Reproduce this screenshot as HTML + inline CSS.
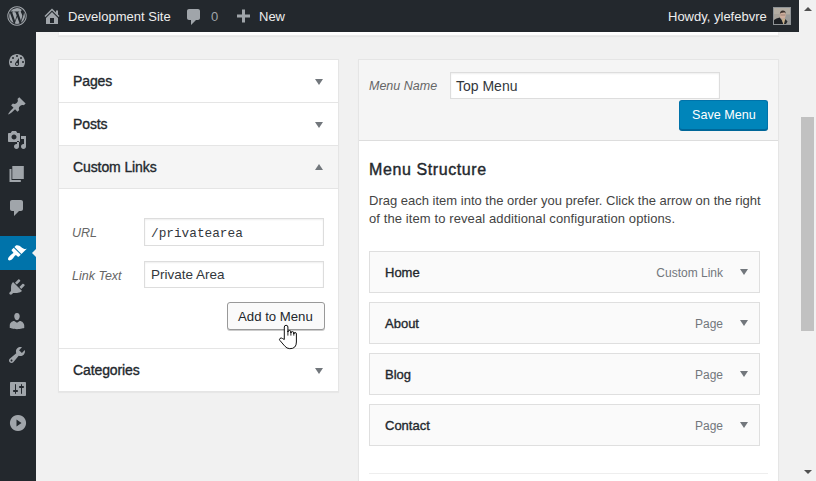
<!DOCTYPE html>
<html><head><meta charset="utf-8">
<style>
*{box-sizing:border-box;margin:0;padding:0}
html,body{width:816px;height:481px;overflow:hidden;background:#f1f1f1;font-family:"Liberation Sans",sans-serif;color:#444;font-size:13px}
.a{position:absolute}
.t{position:absolute;white-space:nowrap;line-height:1}
svg{position:absolute;display:block}
#bar{left:0;top:0;width:799px;height:32px;background:#23282d}
#side{left:0;top:32px;width:36px;height:449px;background:#23282d}
.ico{fill:#a0a5aa}
.box{background:#fff;border:1px solid #e5e5e5;box-shadow:0 1px 1px rgba(0,0,0,.04)}
.hd{position:absolute;left:0;width:279px;height:43px;border-bottom:1px solid #e5e5e5}
.hd span{position:absolute;left:14px;font-size:14px;font-weight:normal;color:#23282d;line-height:1;letter-spacing:-0.1px;-webkit-text-stroke:0.35px #23282d}
.arr{position:absolute;width:0;height:0;border-left:4px solid transparent;border-right:4px solid transparent}
.dn{border-top:6px solid #72777c}
.up{border-bottom:6px solid #72777c}
.inp{position:absolute;background:#fff;border:1px solid #ddd;box-shadow:inset 0 1px 2px rgba(0,0,0,.07)}
.lab{position:absolute;font-style:italic;color:#666;line-height:1;white-space:nowrap}
.item{position:absolute;left:369px;width:391px;height:42px;background:#fafafa;border:1px solid #dfdfdf}
.item b{position:absolute;left:15px;top:14px;font-size:13px;font-weight:normal;color:#23282d;line-height:1;-webkit-text-stroke:0.35px #23282d}
.item i{position:absolute;right:36px;top:15px;font-size:12px;font-style:normal;color:#72777c;line-height:1}
.item .arr{left:370px;top:17px}
</style></head><body>

<!-- side menu -->
<div id="side" class="a"></div>
<div class="a" style="left:0;top:236px;width:36px;height:34px;background:#0073aa"></div>
<div class="a" style="left:32px;top:249px;width:0;height:0;border-top:4px solid transparent;border-bottom:4px solid transparent;border-right:4px solid #f1f1f1"></div>
<!-- side icons -->
<svg style="left:7px;top:51px" width="20" height="20" viewBox="0 0 20 20"><g class="ico"><path d="M3.76 16h12.48c1.1-1.37 1.76-3.11 1.76-5 0-4.42-3.58-8-8-8s-8 3.58-8 8c0 1.89.66 3.63 1.76 5z"/><g fill="#23282d"><circle cx="10" cy="5" r="1"/><circle cx="6" cy="7" r="1"/><circle cx="14" cy="7" r="1"/><circle cx="4" cy="11" r="1"/><circle cx="16" cy="11" r="1"/><path d="M8.63 11.55L12 7v6c0 1.1-.9 2-2 2s-2-.9-2-2c0-.57.24-1.08.63-1.45z"/></g><circle cx="10" cy="13" r="1" /></g></svg>
<svg style="left:7px;top:96px" width="20" height="20" viewBox="0 0 20 20"><g class="ico"><path d="M10.44 3.02l1.82-1.82 6.36 6.35-1.83 1.82c-1.05-.68-2.48-.57-3.41.36l-.75.75c-.92.93-1.04 2.35-.35 3.41l-1.83 1.82-2.41-2.41-2.8 2.79c-.42.42-3.38 2.71-3.8 2.290s1.86-3.39 2.28-3.81l2.79-2.79L4.1 9.36l1.83-1.82c1.05.69 2.48.57 3.4-.36l.75-.75c.93-.92 1.05-2.35.36-3.41z"/></g></svg>
<svg style="left:7px;top:130px" width="20" height="20" viewBox="0 0 20 20"><g class="ico"><path d="M13 11V4c0-.55-.45-1-1-1h-1.67L9 1H5L3.67 3H2c-.55 0-1 .45-1 1v7c0 .55.45 1 1 1h10c.55 0 1-.45 1-1zM7 4.5c1.38 0 2.5 1.12 2.5 2.5S8.38 9.5 7 9.5 4.5 8.38 4.5 7 5.620 4.5 7 4.5zM14 6h5v10.5c0 1.38-1.12 2.5-2.5 2.5S14 17.88 14 16.5s1.12-2.5 2.5-2.5c.17 0 .34.02.5.05V9h-3V6zm-4 8.05V11h2v5.5c0 1.38-1.12 2.5-2.5 2.5S7 17.88 7 16.5 8.12 14 9.5 14c.17 0 .34.02.5.05z"/></g></svg>
<svg style="left:8px;top:164px" width="20" height="20" viewBox="0 0 20 20"><g class="ico"><path d="M4.3 2H15.8V15H4.3ZM1.5 5H3.5V16H12.8V18H1.5Z"/></g></svg>
<svg style="left:7px;top:198px" width="20" height="20" viewBox="0 0 20 20"><g class="ico"><path d="M5 2h9c1.1 0 2 .9 2 2v7c0 1.1-.9 2-2 2h-2l-5 5v-5H5c-1.1 0-2-.9-2-2V4c0-1.1.9-2 2-2z"/></g></svg>
<svg style="left:7px;top:243px" width="20" height="20" viewBox="0 0 20 20"><g class="ico"><path fill="#fff" d="M14.48 11.06L7.41 3.99l1.5-1.5c.5-.56 2.3-.47 3.51.32 1.21.8 1.43 1.28 2.91 2.1 1.18.64 2.450 1.26 4.45.85zm-.71.71L6.7 4.7 4.93 6.47c-.39.39-.39 1.02 0 1.41l1.06 1.06c.39.39.39 1.030 0 1.42-.6.6-1.43 1.11-2.21 1.69-.35.26-.7.53-1.01.84C1.43 14.23.4 16.08 1.4 17.07c.99 1 2.84-.03 4.18-1.36.31-.31.58-.66.85-1.02.57-.78 1.08-1.61 1.69-2.21.39-.39 1.02-.39 1.41 0l1.06 1.06c.39.39 1.02.39 1.41 0z"/></g></svg>
<svg style="left:7px;top:277px" width="20" height="20" viewBox="0 0 20 20"><g class="ico"><path d="M13.11 4.36L9.87 7.6 8 5.73l3.24-3.24c.35-.34 1.05-.2 1.56.32.52.51.66 1.21.31 1.55zm-8 1.77l.91-1.12 9.01 9.01-1.19.84c-.71.71-2.63 1.16-3.82 1.16H6.14L4.9 17.26c-.59.59-1.54.59-2.12 0-.59-.58-.59-1.53 0-2.12l1.24-1.24v-3.88c0-1.13.4-3.19 1.09-3.89zm7.26 3.97l3.24-3.240c.34-.35 1.04-.21 1.55.31.52.51.66 1.21.31 1.55l-3.24 3.25z"/></g></svg>
<svg style="left:7px;top:311px" width="20" height="20" viewBox="0 0 20 20"><g class="ico"><path d="M10 9.25c-2.27 0-2.73-3.44-2.73-3.44C7 4.02 7.82 2 9.97 2c2.16 0 2.98 2.02 2.710 3.81 0 0-.41 3.44-2.68 3.44zm0 2.57L12.72 10c2.39 0 4.52 2.33 4.52 4.53v2.49s-3.65 1.13-7.24 1.13c-3.65 0-7.24-1.13-7.24-1.13v-2.49c0-2.25 1.94-4.48 4.47-4.48z"/></g></svg>
<svg style="left:7px;top:345px" width="20" height="20" viewBox="0 0 20 20"><g class="ico"><path d="M16.68 9.77c-1.34 1.34-3.3 1.67-4.95.99l-5.41 6.52c-.99.99-2.59.99-3.58 0s-.99-2.59 0-3.57l6.52-5.42c-.68-1.65-.35-3.61.99-4.95 1.28-1.28 3.12-1.62 4.72-1.06l-2.89 2.89 2.82 2.82 2.86-2.87c.53 1.58.18 3.39-1.08 4.650zM3.81 16.21c.4.39 1.04.39 1.43 0 .4-.4.4-1.04 0-1.43-.39-.4-1.03-.4-1.43 0-.39.39-.39 1.03 0 1.43z" fill-rule="evenodd"/></g></svg>
<svg style="left:8px;top:379px" width="20" height="20" viewBox="0 0 20 20"><g class="ico"><path d="M18 16V4c0-.55-.45-1-1-1H3c-.55 0-1 .45-1 1v12c0 .55.45 1 1 1h14c.55 0 1-.45 1-1zM8 11h1c.55 0 1 .45 1 1s-.45 1-1 1H8v1.5c0 .28-.22.5-.5.5s-.5-.22-.5-.5V13H6c-.55 0-1-.45-1-1s.45-1 1-1h1V5.5c0-.28.22-.5.5-.5s.5.22.5.5V11zm5-2h-1c-.55 0-1-.45-1-1s.45-1 1-1h1V5.5c0-.28.22-.5.5-.5s.5.22.5.5V7h1c.55 0 1 .45 1 1s-.45 1-1 1h-1v5.5c0 .28-.22.5-.5.5s-.5-.22-.5-.5V9z"/></g></svg>
<svg style="left:8px;top:413px" width="20" height="20" viewBox="0 0 20 20"><g class="ico"><path fill-rule="evenodd" d="M10 1.9a8.1 8.1 0 1 0 .001 0zM8.5 6.5v7l5-3.5z"/></g></svg>
<!-- top strip (previous box bottom) -->
<div class="a" style="left:58px;top:28px;width:721px;height:8px;background:#fff;border:1px solid #ececec;border-top:none;box-shadow:0 1px 1px rgba(0,0,0,.04)"></div>
<!-- admin bar -->
<div id="bar" class="a"></div>
<!-- scrollbar -->
<div class="a" style="left:799px;top:0;width:17px;height:481px;background:#f1f1f1"></div>
<div class="a" style="left:801px;top:117px;width:13px;height:214px;background:#c1c1c1"></div>
<div class="a arr" style="left:804px;top:7px;border-bottom:4px solid #505050;border-left-width:4px;border-right-width:4px"></div>
<div class="a arr" style="left:804px;top:470px;border-top:4px solid #505050;border-left-width:4px;border-right-width:4px"></div>

<!-- admin bar content -->
<svg style="left:7px;top:6px" width="20" height="20" viewBox="0 0 20 20"><g class="ico">
<path fill-rule="evenodd" d="M10 0.3a9.7 9.7 0 1 0 0.001 0zM10 1.3a8.7 8.7 0 1 1 -0.001 0z"/>
<path d="M2.2 10a7.8 7.8 0 0 0 4.4 7l-3.7-10.2A7.8 7.8 0 0 0 2.2 10zM15.2 9.6c0-1-.35-1.6-.65-2.2-.4-.65-.78-1.2-.78-1.85 0-.73.55-1.4 1.33-1.4h.1A7.8 7.8 0 0 0 3.4 5.6h.5c.8 0 2.1-.1 2.1-.1.42-.03.47.6.05.64 0 0-.43.05-.9.07l2.87 8.53 1.72-5.17-1.23-3.36c-.42-.02-.82-.07-.82-.07-.42-.03-.37-.67.05-.64 0 0 1.3.1 2.08.1.8 0 2.1-.1 2.1-.1.42-.03.47.6.05.64 0 0-.43.05-.9.07l2.85 8.47.8-2.6c.35-1.1.6-1.9.6-2.6zM10.14 10.7l-2.36 6.87a7.8 7.8 0 0 0 4.8-.13l-.06-.1zM16.9 6.23c.03.25.05.52.05.8 0 .8-.15 1.68-.6 2.8l-2.38 6.9A7.8 7.8 0 0 0 16.9 6.23z"/>
</g></svg>
<svg style="left:42px;top:6px" width="20" height="20" viewBox="0 0 20 20"><path class="ico" d="M16 8.5l1.53 1.53-1.06 1.06L10 4.62l-6.47 6.47-1.06-1.06L10 2.5l4 4v-2h2v4zm-6-2.46l6 5.99V18H4v-5.97zM12 17v-5H8v5h4z"/></svg>
<div class="t" style="left:68px;top:10px;font-size:13px;color:#eee">Development Site</div>
<svg style="left:184px;top:7px" width="20" height="20" viewBox="0 0 20 20"><path class="ico" d="M5 2h9c1.1 0 2 .9 2 2v7c0 1.1-.9 2-2 2h-2l-5 5v-5H5c-1.1 0-2-.9-2-2V4c0-1.1.9-2 2-2z"/></svg>
<div class="t" style="left:211px;top:10px;font-size:13px;color:#a0a5aa">0</div>
<svg style="left:233px;top:6px" width="20" height="20" viewBox="0 0 20 20"><path class="ico" d="M17 7v3h-5v5H9v-5H4V7h5V2h3v5h5z" transform="translate(0,1.5)"/></svg>
<div class="t" style="left:259px;top:10px;font-size:13px;color:#eee">New</div>
<div class="t" style="left:668px;top:10px;font-size:13px;color:#eee">Howdy, ylefebvre</div>
<svg style="left:773px;top:7px" width="18" height="18" viewBox="0 0 18 18"><rect x="0" y="0" width="18" height="18" fill="#8f9396"/><rect x="1" y="1" width="16" height="16" fill="#a7a29a"/><rect x="1" y="1" width="16" height="6" fill="#b3ada3"/><rect x="12" y="8" width="5" height="9" fill="#9a9a98"/><path d="M1 17V13Q3 11 6.8 10.5L9 13.5 10.5 17z" fill="#1d2024"/><ellipse cx="9.7" cy="8.2" rx="2.9" ry="3.5" fill="#cfae9c"/><path d="M6.9 7Q7 3.8 9.8 3.6Q12.7 3.7 12.8 6.8L12 5.6Q10 5.2 7.8 6z" fill="#3b302b"/><path d="M7.4 8H12.2" stroke="#6b5a52" stroke-width=".5"/><path d="M9 12.5L10.2 17H12.5L13 13.2 11.5 11.5z" fill="#c9b08a"/><path d="M12.3 12L14.5 14.5 13 17H11z" fill="#26292c"/></svg>



<!-- left accordion -->
<div class="a box" style="left:58px;top:59px;width:281px;height:333px">
  <div class="hd" style="top:0"><span style="top:14px">Pages</span><i class="arr dn" style="left:256px;top:19px"></i></div>
  <div class="hd" style="top:43px"><span style="top:14px">Posts</span><i class="arr dn" style="left:256px;top:19px"></i></div>
  <div class="hd" style="top:86px;background:#f5f5f5"><span style="top:14px">Custom Links</span><i class="arr up" style="left:256px;top:18px"></i></div>
  <div class="hd" style="top:289px;border-bottom:none"><span style="top:14px">Categories</span><i class="arr dn" style="left:256px;top:19px"></i></div>
  <div class="a" style="left:0;top:288px;width:279px;height:1px;background:#e5e5e5"></div>
</div>
<div class="lab" style="left:72px;top:227px;font-size:12.5px">URL</div>
<div class="inp" style="left:144px;top:218px;width:180px;height:28px"></div>
<div class="t" style="left:151px;top:228px;font-family:'Liberation Mono',monospace;font-size:12.75px;color:#32373c">/privatearea</div>
<div class="lab" style="left:72px;top:270px;font-size:12.5px">Link Text</div>
<div class="inp" style="left:144px;top:261px;width:180px;height:27px"></div>
<div class="t" style="left:151px;top:268px;font-size:13.5px;color:#32373c">Private Area</div>
<div class="a" style="left:227px;top:302px;width:98px;height:28px;background:#fafafa;border:1px solid #999;border-radius:3px;box-shadow:0 1px 0 #ccc"></div>
<div class="t" style="left:238px;top:310px;font-size:13.2px;color:#23282d">Add to Menu</div>

<!-- right menu box -->
<div class="a box" style="left:358px;top:59px;width:421px;height:430px"></div>
<div class="a" style="left:359px;top:60px;width:419px;height:81px;background:#f5f5f5;border-bottom:1px solid #ddd"></div>
<div class="lab" style="left:369px;top:80px;font-size:12.5px">Menu Name</div>
<div class="inp" style="left:450px;top:72px;width:270px;height:27px"></div>
<div class="t" style="left:456px;top:79px;font-size:14px;color:#32373c">Top Menu</div>
<div class="a" style="left:679px;top:100px;width:89px;height:30px;background:#0085ba;border:1px solid #0073aa;border-bottom-color:#006799;border-radius:3px;box-shadow:0 1px 0 #006799"></div>
<div class="t" style="left:692px;top:109px;font-size:12.6px;color:#fff">Save Menu</div>

<div class="t" style="left:369px;top:162px;font-size:16px;font-weight:normal;color:#23282d;letter-spacing:0.6px;-webkit-text-stroke:0.4px #23282d">Menu Structure</div>
<div class="t" style="left:369px;top:194px;font-size:13px;color:#444">Drag each item into the order you prefer. Click the arrow on the right</div>
<div class="t" style="left:369px;top:212px;font-size:13px;color:#444;letter-spacing:0.1px">of the item to reveal additional configuration options.</div>

<div class="item" style="top:251px"><b>Home</b><i>Custom Link</i><span class="arr dn"></span></div>
<div class="item" style="top:302px"><b>About</b><i>Page</i><span class="arr dn"></span></div>
<div class="item" style="top:353px"><b>Blog</b><i>Page</i><span class="arr dn"></span></div>
<div class="item" style="top:404px"><b>Contact</b><i>Page</i><span class="arr dn"></span></div>
<div class="a" style="left:369px;top:473px;width:399px;height:1px;background:#eee"></div>

<svg style="left:274px;top:320px" width="30" height="30" viewBox="0 0 30 30"><path d="M10.3 19.5V7Q10.3 5.3 12.1 5.3Q13.9 5.3 13.9 7V12Q13.9 10.5 15.4 10.5Q16.9 10.5 16.9 12V13Q16.9 11.6 18.35 11.6Q19.8 11.6 19.8 13V14Q19.8 12.5 21.1 12.5Q22.4 12.5 22.4 14V22Q22.4 28.7 15.8 28.7Q12.8 28.7 10.5 25.8L5.8 20.3Q5 19.2 6 18.4Q7.2 17.5 8.5 18.5Z" fill="#fff" stroke="#111" stroke-width="1" stroke-linejoin="round"/><path d="M13.9 11V15.6M16.9 12V15.6M19.8 13V15.6" stroke="#111" stroke-width="0.9"/></svg>
</body></html>
